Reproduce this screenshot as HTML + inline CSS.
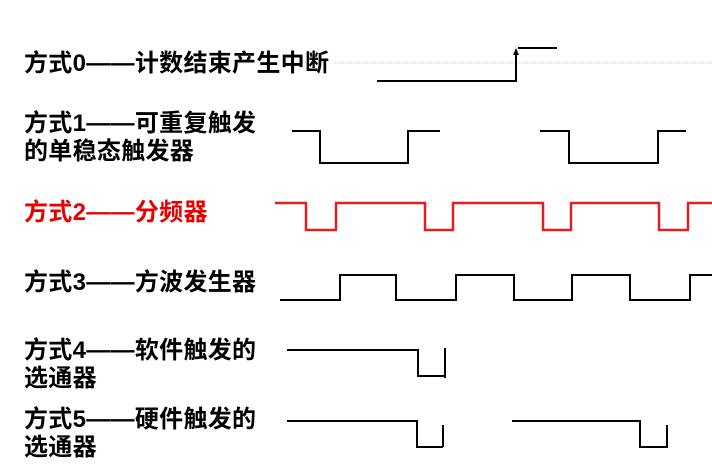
<!DOCTYPE html>
<html><head><meta charset="utf-8"><style>
html,body{margin:0;padding:0;background:#fff;width:712px;height:468px;overflow:hidden;position:relative}
.t{position:absolute;left:24px;font-family:"Liberation Sans","Noto Sans CJK SC",sans-serif;font-weight:bold;font-size:24px;line-height:28px;color:#000;white-space:nowrap;letter-spacing:0.3px}
svg{position:absolute;left:0;top:0}
</style></head><body>
<div class="t" style="top:50px">方式0——计数结束产生中断</div>
<div class="t" style="top:110px">方式1——可重复触发<br>的单稳态触发器</div>
<div class="t" style="top:199px;color:#e60000">方式2——分频器</div>
<div class="t" style="top:269px">方式3——方波发生器</div>
<div class="t" style="top:337px">方式4——软件触发的<br>选通器</div>
<div class="t" style="top:406px">方式5——硬件触发的<br>选通器</div>
<svg width="712" height="468" fill="none" stroke="#000" stroke-width="2">
<line x1="335" y1="63" x2="712" y2="63" stroke="#ccc" stroke-width="1" stroke-dasharray="1,1"/>
<polyline points="377,81 516,81 516,52"/>
<polygon points="513,55 519,55 516,48" fill="#000" stroke="none"/>
<line x1="518" y1="48" x2="557" y2="48"/>
<polyline points="292,131 320,131 320,163 408,163 408,131 440,131"/>
<polyline points="540,131 569,131 569,163 658,163 658,131 686,131"/>
<polyline stroke="#e02020" stroke-width="2.5" points="275,203 306,203 306,230 336,230 336,203 425,203 425,230 453,230 453,203 543,203 543,230 571,230 571,203 659,203 659,230 688,230 688,203 712,203"/>
<polyline points="280,300 340,300 340,275 396,275 396,300 456,300 456,275 514,275 514,300 572,300 572,275 630,275 630,300 690,300 690,275 712,275"/>
<polyline points="287,350 418,350 418,376 445,376"/>
<line x1="445" y1="348" x2="445" y2="378"/>
<polyline points="287,421 417,421 417,447 443,447"/>
<line x1="443" y1="425" x2="443" y2="447"/>
<polyline points="512,421 640,421 640,447 666,447"/>
<line x1="667" y1="425" x2="667" y2="448"/>
</svg>
</body></html>
